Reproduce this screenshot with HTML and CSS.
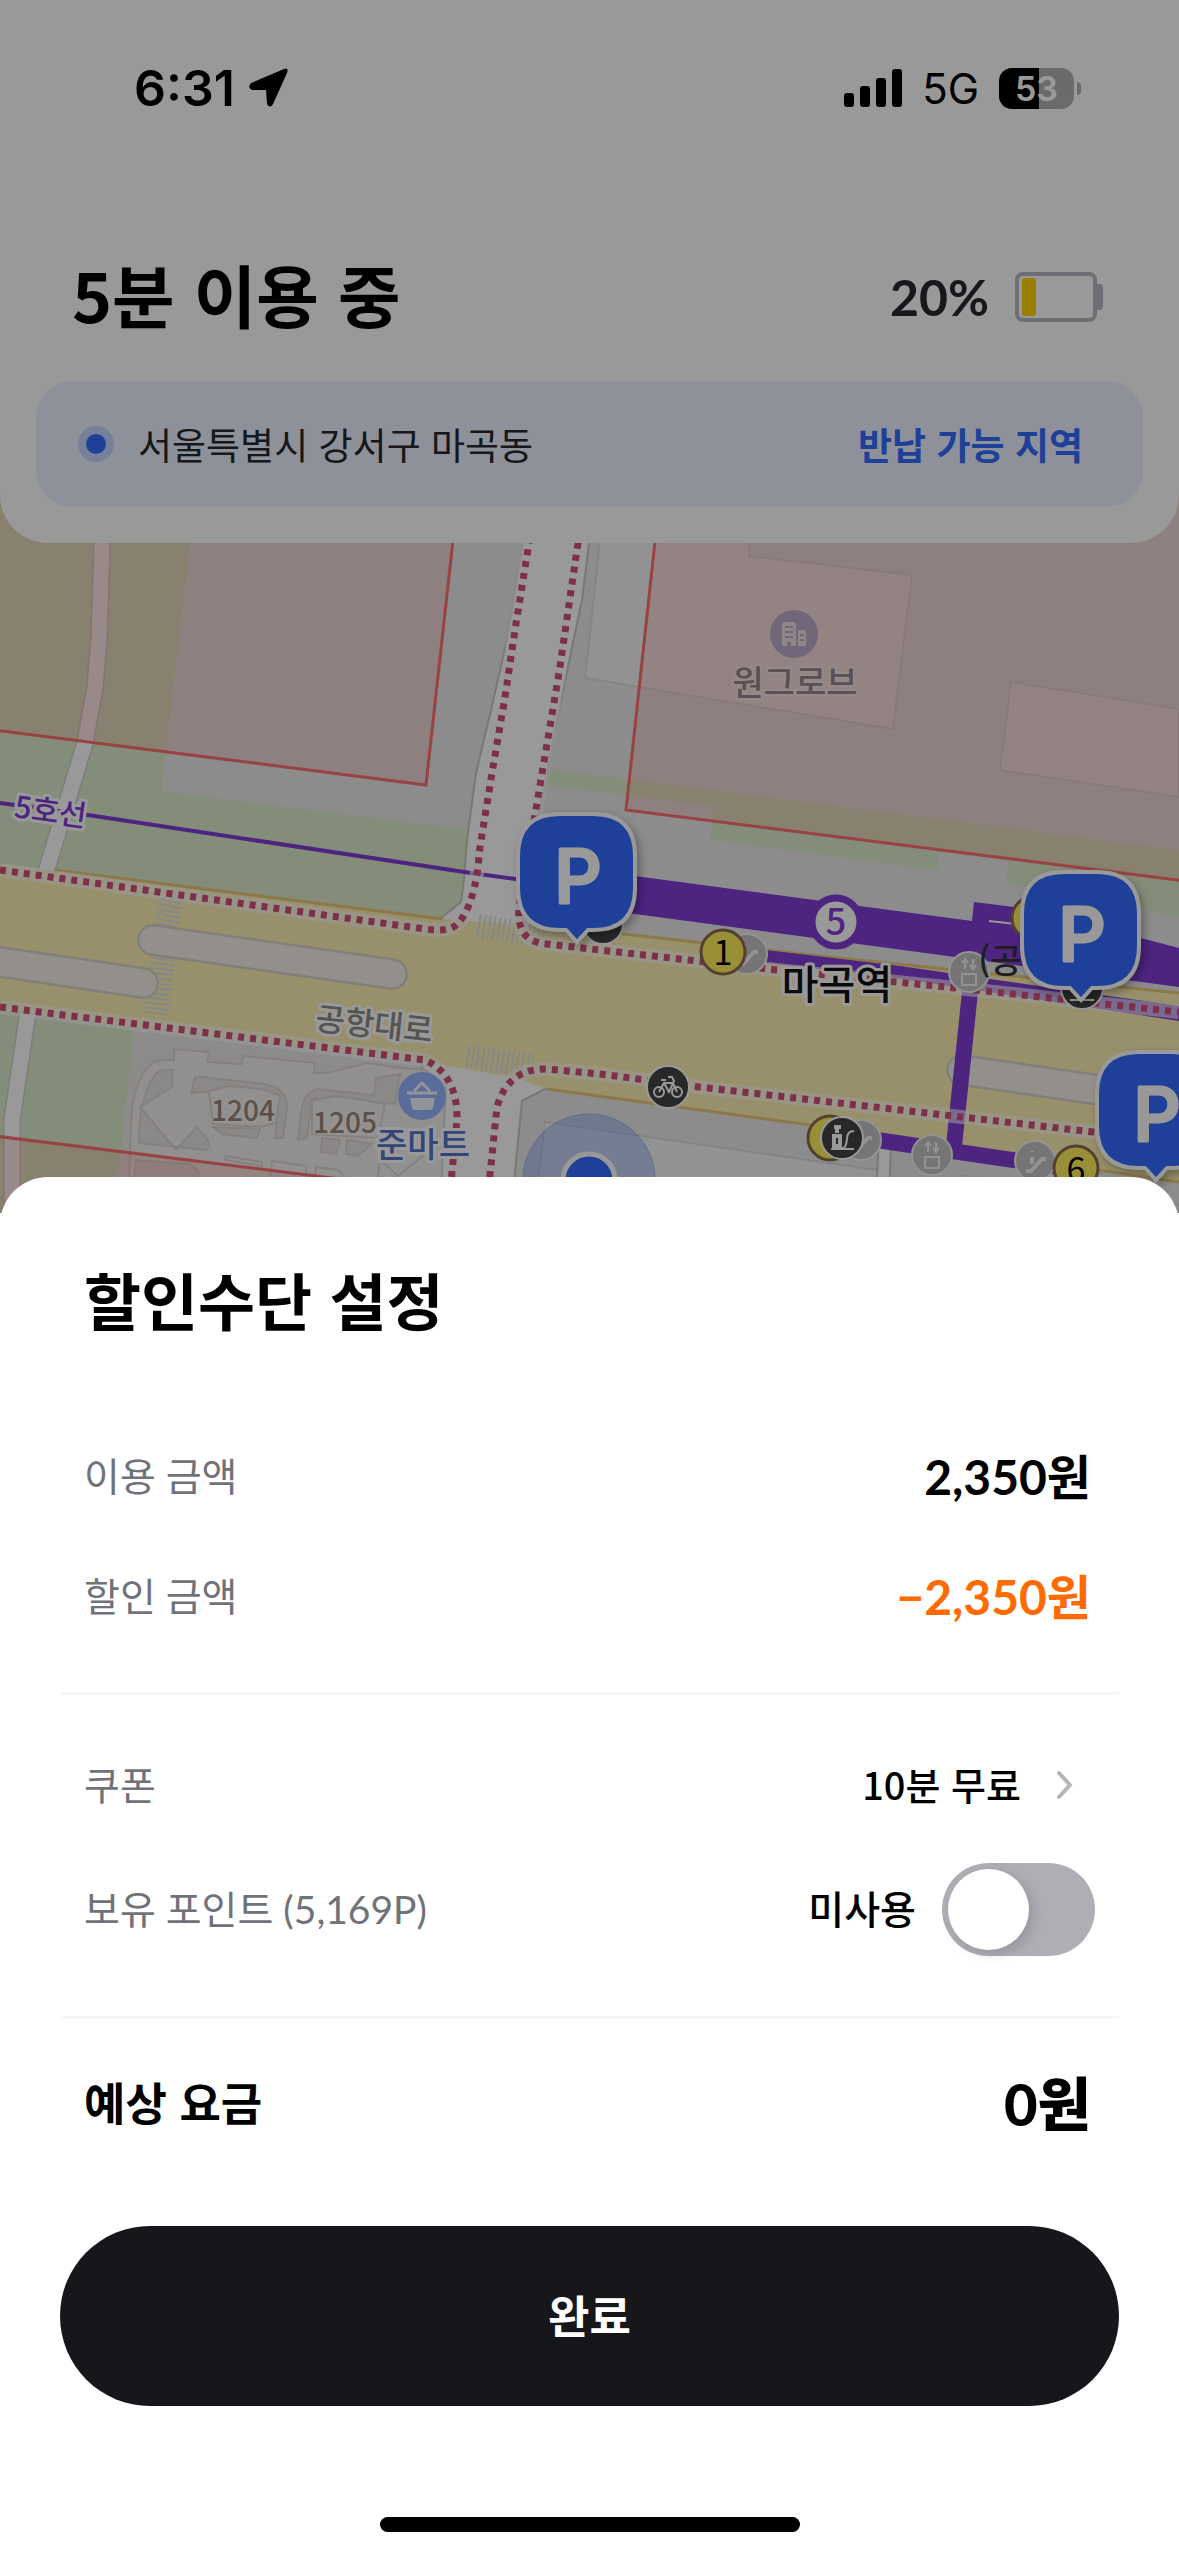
FILE: index.html
```html
<!DOCTYPE html>
<html lang="ko">
<head>
    <meta charset="UTF-8">
    <meta name="viewport" content="width=device-width, initial-scale=1.0">
    <title>할인수단 설정</title>
    <link rel="stylesheet" href="styles.css">
</head>
<body>
    <div class="ride">
        <header class="ride-header">
            <div class="status-bar">
                <div class="status-left">
                    <span class="clock">6:31</span>
                    <svg width="40" height="40" viewBox="0 0 40 40"><path d="M36 1 Q41 -1 39 5 L25 36 Q22 41 19 36 L18 22 L4 22 Q-1 20 3 15 Z"/></svg>
                </div>
                <div class="status-right">
                    <svg width="58" height="38" viewBox="0 0 58 38">
                        <rect x="0" y="24" width="10" height="14" rx="3"/>
                        <rect x="16" y="17" width="10" height="21" rx="3"/>
                        <rect x="32" y="9" width="10" height="29" rx="3"/>
                        <rect x="48" y="0" width="10" height="38" rx="3"/>
                    </svg>
                    <span class="network">5G</span>
                    <div class="phone-battery"><span class="phone-battery-level">53</span></div>
                </div>
            </div>

            <div class="ride-title">
                <h1>5분 이용 중</h1>
                <div class="scooter-battery">
                    <span>20%</span>
                    <svg width="88" height="50" viewBox="0 0 88 50">
                        <rect x="2" y="2" width="78" height="46" rx="6" fill="none" stroke="#b8bac4" stroke-width="4"/>
                        <path d="M82 12 h2 q4 0 4 4 v18 q0 4 -4 4 h-2 z" fill="#b8bac4"/>
                        <rect x="7" y="6" width="14" height="38" rx="3" fill="#ffd200"/>
                    </svg>
                </div>
            </div>

            <div class="area">
                <span class="area-dot"></span>
                <span class="area-name">서울특별시 강서구 마곡동</span>
                <strong class="area-state">반납 가능 지역</strong>
            </div>
        </header>

        <svg class="map" viewBox="0 495 1179 718">
            <defs>
                <g id="pin">
                    <path d="M42 2 H75 Q117 2 117 44 V76 Q117 118 75 118 H70 L59 130 L48 118 H42 Q0 118 0 76 V44 Q0 2 42 2 Z"/>
                    <text x="60" y="91">P</text>
                </g>
                <g id="elevator">
                    <circle r="20"/>
                    <path d="M-7 2 H7 V13 H-7 Z M-4 -3 V-13 M-7 -9 L-4 -13 L-1 -9 M4 -13 V-3 M1 -7 L4 -3 L7 -7"/>
                </g>
                <g id="escalator">
                    <circle r="20"/>
                    <path d="M-9 10 H-4 L7 -2 H11" stroke-width="4"/>
                    <path d="M-3 -10 V-9 M-3 -4 V3" stroke-width="4"/>
                </g>
            </defs>

            <!-- ground -->
            <rect y="495" width="1179" height="718" fill="#e9e9e9"/>
            <path class="green" d="M0 495 H196 L161 791 L470 830 L461 902 L441 918 L0 864 Z"/>
            <path class="green" d="M549 769 L1179 850 V917 L1006 883 L1008 861 L939 852 L937 870 L710 840 L714 807 L545 785 Z"/>
            <path class="green" d="M0 1010 L134 1028 L116 1213 H0 Z"/>
            <path d="M134 1028 L470 1060 V1213 H114 Z" fill="#ece8e6"/>
            <path class="building" d="M605 495 L585 678 L893 729 L912 575 L749 556 V495 Z"/>
            <path class="building" d="M1011 682 L1179 709 V797 L1000 770 Z"/>
            <path class="building" d="M545 1122 L877 1170 V1213 H535 Z"/>
            <path class="building" d="M960 1175 L1179 1205 V1213 H955 Z"/>

            <!-- side roads -->
            <path class="lane-edge" d="M102 495 V543 L99 640 L95 687 L85 743 L46 872"/>
            <path class="lane" d="M102 495 V543 L99 640 L95 687 L85 743 L46 872"/>
            <path class="lane-edge" d="M28 1012 L12 1120 V1213"/>
            <path class="lane" d="M28 1012 L12 1120 V1213"/>
            <path class="road" d="M527 495 L523 543 L507 640 L491 710 L476 773 L467 840 L464 880 L461 902 L441 918 L460 935 L545 945 L520 900 L538 817 L545 787 L555 730 L570 657 L582 600 L589 543 V495 Z"/>
            <path class="road" d="M421 1055 L550 1070 L547 1088 L522 1101 L511 1213 H440 Z"/>
            <path class="road" d="M879 1139 H891 L889 1213 H875 Z"/>

            <!-- main road -->
            <path d="M0 864 L442 919 L617 932 L829 957 L1179 993 V1182 L1098 1170 L803 1124 L547 1089 L517 1078 L421 1061 L134 1028 L0 1010 Z" fill="#fdf0b2"/>
            <path d="M54 870 L442 919 M580 929 L829 957 L1179 993 M547 1089 L803 1124 L1098 1170 L1179 1182" fill="none" stroke="#ebc878" stroke-width="3"/>
            <path class="crosswalk" d="M171 900 L166 926 M163 958 L156 1014 M478 926 L545 937 M467 1056 L532 1066"/>
            <path class="median-edge" d="M153 940 L392 974 M-20 959 L143 983 M962 1070 L1140 1096"/>
            <path class="median" d="M153 940 L392 974 M-20 959 L143 983 M962 1070 L1140 1096"/>

            <!-- apartment complex -->
            <g class="complex">
                <path d="M174 1060 H160 Q146 1064 140 1080 Q132 1095 131 1125 L128 1213 H440 L446 1085 L425 1070 L401 1068 L367 1063 L327 1073 H314 L315 1063 L243 1056 L242 1064 L207 1062 L209 1052 L174 1049 Z"/>
                <path class="yard" d="M172 1070 H162 Q152 1074 147 1090 Q141 1105 140 1120 L139 1143 L205 1150 Q212 1148 208 1140 L197 1127 L176 1150 L140 1107 L172 1087 Z"/>
                <path class="yard" d="M203 1077 L265 1084 Q287 1088 287 1107 L283 1138 H275 L279 1100 L203 1092 L191 1093 L195 1077 Z"/>
                <path class="yard" d="M374 1095 L318 1089 Q304 1093 302 1107 L298 1140 L307 1138 L312 1098 L395 1104 L400 1074 L376 1078 Z"/>
                <path class="yard" d="M322 1138 L340 1140 L336 1154 L321 1152 Z M347 1140 L372 1144 L358 1156 L346 1154 Z"/>
                <path class="yard" d="M213 1127 L260 1129 L257 1138 L222 1134 Z M136 1160 L190 1164 Q200 1170 201 1180 H134 Z"/>
                <path d="M226 1156 L262 1162 V1166 L225 1160 Z M272 1161 L306 1166 V1180 H270 Z M316 1167 L338 1170 Q346 1176 345 1185 H314 Z"/>
                <path d="M209 1091 L230 1086 L260 1089 L280 1095 L276 1123 L260 1127 L213 1124 Z"/>
                <path d="M312 1101 L335 1096 L365 1100 L385 1104 L378 1138 L312 1134 Z"/>
                <path d="M380 1160 L398 1176 L430 1150 M380 1160 L378 1177 L400 1180"/>
            </g>

            <!-- restricted zones -->
            <path class="zone" d="M-5 495 H458 L426 785 L-5 730 Z"/>
            <path class="zone" d="M660 495 L626 810 L1185 881 V495 Z"/>
            <path class="zone" d="M-5 1136 L620 1214 L-5 1220 Z"/>

            <!-- subway line 5 -->
            <path d="M0 803 L88 815 L471 873 L530 881" fill="none" stroke="#803cd5" stroke-width="4"/>
            <path d="M620 874 L972 921 L974 902 L1030 909 L1179 948 V987 L955 957 L620 912 Z" fill="#803cd5"/>
            <path d="M766 950 L900 966 L1179 1006 V1021 L890 977 L766 963 Z" fill="#803cd5"/>
            <path d="M971 982 L954 1146" fill="none" stroke="#803cd5" stroke-width="16"/>
            <path d="M870 1139 L1054 1166" fill="none" stroke="#803cd5" stroke-width="16"/>
            <path d="M989 921 L1025 925" stroke="#fff" stroke-width="2"/>

            <!-- footpaths -->
            <g class="path-halo">
                <path d="M0 870 L425 929 Q446 932 455 926 Q472 912 478 867 L480 847 L492 773 L505 697 L515 630 L529 543 L533 495"/>
                <path d="M582 495 L578 543 L559 673 L535 815 L519 908 Q516 942 547 944 L600 950 L777 970 L976 990 L1179 1012"/>
                <path d="M0 1007 L425 1060 Q458 1075 457 1120 L448 1213"/>
                <path d="M486 1213 L497 1107 Q508 1068 547 1069 L600 1074 L699 1087 L1093 1132 L1179 1143"/>
            </g>
            <g class="path-dots">
                <path d="M0 870 L425 929 Q446 932 455 926 Q472 912 478 867 L480 847 L492 773 L505 697 L515 630 L529 543 L533 495"/>
                <path d="M582 495 L578 543 L559 673 L535 815 L519 908 Q516 942 547 944 L600 950 L777 970 L976 990 L1179 1012"/>
                <path d="M0 1007 L425 1060 Q458 1075 457 1120 L448 1213"/>
                <path d="M486 1213 L497 1107 Q508 1068 547 1069 L600 1074 L699 1087 L1093 1132 L1179 1143"/>
            </g>

            <!-- places -->
            <circle cx="794" cy="634" r="24" fill="#beaccb"/>
            <path d="M782 646 V625 q0 -3 3 -3 h8 q3 0 3 3 V646 h-5 v-4 h-4 v4 Z M798 646 V630 h5 q3 0 3 3 V646 Z" fill="#eedfe0"/>
            <path d="M785 627 h8 M785 632 h8 M785 637 h8 M800 635 h4 M800 640 h4" stroke="#beaccb" stroke-width="2"/>
            <circle cx="422" cy="1096" r="24" fill="#96b4ff"/>
            <path d="M407 1093 H437 M414 1091 L422 1083 L430 1091" fill="none" stroke="#f2f5ff" stroke-width="3"/>
            <path d="M410 1098 H435 L433 1108 Q432 1110 430 1110 H414 Q412 1110 412 1108 Z" fill="#f2f5ff"/>

            <g class="map-label">
                <text class="soft" x="795" y="695" font-size="34" fill="#99848e">원그로브</text>
                <text x="423" y="1157" font-size="34" fill="#5774c8">준마트</text>
                <text class="soft" x="243" y="1121" font-size="28" fill="#988878">1204</text>
                <text class="soft" x="345" y="1133" font-size="28" fill="#988878">1205</text>
                <text x="373" y="1036" font-size="32" fill="#8c8c88" transform="rotate(6 373 1036)">공항대로</text>
                <text x="49" y="822" font-size="30" fill="#803cd5" transform="rotate(8 49 822)">5호선</text>
            </g>

            <!-- station exits and facilities -->
            <g class="facility">
                <use href="#escalator" x="747" y="954"/>
                <use href="#elevator" x="969" y="972"/>
                <use href="#elevator" x="932" y="1155"/>
                <use href="#escalator" x="861" y="1140"/>
                <use href="#escalator" x="1035" y="1161"/>
            </g>
            <g class="exit">
                <circle cx="723" cy="952" r="22"/>
                <text x="723" y="965">1</text>
                <circle cx="830" cy="1138" r="22"/>
                <circle cx="1034" cy="918" r="22"/>
                <circle cx="1076" cy="1168" r="22"/>
                <text x="1076" y="1182">6</text>
            </g>
            <g class="rental">
                <circle cx="603" cy="924" r="20"/>
                <circle cx="1082" cy="988" r="21"/>
                <path d="M1070 1000 H1094"/>
                <circle cx="668" cy="1087" r="21"/>
                <circle cx="659" cy="1092" r="5"/>
                <circle cx="677" cy="1092" r="5"/>
                <path d="M659 1092 L664 1083 H673 L677 1092 M664 1083 L669 1092 L674 1081 L672 1077 H668 M661 1080 H666"/>
                <circle cx="842" cy="1138" r="21"/>
                <path d="M831 1149 H854 M842 1148 Q846 1149 847 1139 Q847 1131 854 1131"/>
                <path d="M834 1136 H840 V1146 H834 Z M837 1133 V1128 M834 1127 H841" stroke-width="4"/>
            </g>
            <circle cx="836" cy="922" r="24" fill="#fff" stroke="#803cd5" stroke-width="7"/>
            <g class="map-label">
                <text class="plain" x="836" y="935" font-size="36" font-weight="700" fill="#803cd5">5</text>
                <text x="837" y="999" font-size="40" fill="#111">마곡역</text>
                <text class="plain" x="1000" y="973" font-size="34" fill="#333">(공</text>
            </g>

            <!-- current position -->
            <circle cx="589" cy="1180" r="66" fill="#326bfd" fill-opacity=".25" stroke="#9db6f5" stroke-width="1"/>
            <circle cx="589" cy="1180" r="26" fill="#326bfd" stroke="#fff" stroke-width="5"/>

            <g class="pins">
                <use href="#pin" x="518" y="812"/>
                <use href="#pin" x="1022" y="870"/>
                <use href="#pin" x="1097" y="1050"/>
            </g>
        </svg>
        <div class="dim"></div>
    </div>

    <main class="sheet">
        <h2>할인수단 설정</h2>
        <div class="row">
            <span class="label">이용 금액</span>
            <span class="price">2,350원</span>
        </div>
        <div class="row">
            <span class="label">할인 금액</span>
            <span class="price discount">−2,350원</span>
        </div>
        <hr>
        <div class="options">
            <div class="row option">
                <span class="label" id="couponLabel">쿠폰</span>
                <button type="button" class="coupon" aria-labelledby="couponLabel">
                    <span>10분 무료</span>
                    <svg width="54" height="32" viewBox="0 0 54 32"><path d="M22 4 L33 16 L22 28" fill="none" stroke="#b4b6bc" stroke-width="4" stroke-linecap="round" stroke-linejoin="round"/></svg>
                </button>
            </div>
            <div class="row option point">
                <label class="label" for="usePoint">보유 포인트 (5,169P)</label>
                <span class="point-use"><span>미사용</span> <input type="checkbox" role="switch" id="usePoint" class="switch"></span>
            </div>
        </div>
        <hr>
        <div class="row total">
            <span>예상 요금</span>
            <strong>0원</strong>
        </div>
        <button type="button" class="done">완료</button>
        <div class="home-bar"></div>
    </main>
</body>
</html>
```
FILE: styles.css
```css
* {
    box-sizing: border-box;
}

body {
    margin: 0;
    background-color: #fff;
    color: #000;
    font-family: "Noto Sans CJK KR", sans-serif;
}

h1, h2 {
    margin: 0;
    font-weight: 700;
}

button {
    border: none;
    padding: 0;
    font-family: inherit;
    cursor: pointer;
}

svg {
    flex: none;
}

/* dimmed riding screen */
.ride {
    position: relative;
    overflow: hidden;
}

.dim {
    position: absolute;
    inset: 0;
    background-color: rgba(0, 0, 0, 0.4);
}

.ride-header {
    position: relative;
    padding-bottom: 36px;
    border-radius: 0 0 48px 48px;
    background-color: #fff;
}

.status-bar {
    display: flex;
    justify-content: space-between;
    align-items: center;
    height: 176px;
    padding: 0 98px 0 134px;
    font-family: Inter, sans-serif;
}

.status-left, .status-right {
    display: flex;
    align-items: center;
}

.status-left {
    gap: 13px;
}

.status-right {
    gap: 20px;
}

.clock {
    font-size: 50px;
    font-weight: 600;
}

.network {
    font-size: 42px;
    font-weight: 400;
}

.phone-battery {
    position: relative;
    width: 75px;
    height: 41px;
    margin-right: 7px;
    border-radius: 13px;
    background: linear-gradient(to right, #000 53%, #b2b2b2 53%);
    text-align: center;
}

.phone-battery::after {
    content: "";
    position: absolute;
    top: 14px;
    right: -7px;
    width: 4px;
    height: 13px;
    border-radius: 0 4px 4px 0;
    background-color: #b2b2b2;
}

.phone-battery-level {
    color: #fff;
    font-size: 34px;
    font-weight: 600;
    line-height: 41px;
}

.ride-title {
    display: flex;
    justify-content: space-between;
    align-items: center;
    padding: 77px 76px 40px 72px;
}

.ride-title h1 {
    padding-bottom: 6px;
    font-size: 68px;
    line-height: 82px;
}

.scooter-battery {
    display: flex;
    align-items: center;
    gap: 26px;
    color: #25282e;
    font-family: Lato, "Noto Sans CJK KR", sans-serif;
    font-size: 50px;
    font-weight: 700;
    line-height: 60px;
}

.area {
    display: flex;
    align-items: center;
    height: 126px;
    margin: 0 36px;
    padding: 0 60px 0 42px;
    border-radius: 36px;
    background-color: #edf2ff;
    font-size: 37px;
}

.area-dot {
    width: 36px;
    height: 36px;
    margin-right: 24px;
    border: 8px solid #c8d5ff;
    border-radius: 50%;
    background-color: #326bfd;
}

.area-name {
    flex: 1;
    color: #25282e;
}

.area-state {
    color: #326bfd;
}

/* map */
.map {
    display: block;
    width: 100%;
    margin-top: -48px;
}

.green {
    fill: #dcebca;
}

.building {
    fill: #f3f3f3;
    stroke: #dcdcdc;
    stroke-width: 2;
}

.lane, .lane-edge {
    fill: none;
    stroke: #fff;
    stroke-width: 15;
}

.lane-edge {
    stroke: #d0d0cc;
    stroke-width: 18;
}

.road {
    fill: #fff;
    stroke: #c8c8c0;
    stroke-width: 2;
}

.crosswalk {
    fill: none;
    stroke: #e0e0e4;
    stroke-width: 24;
    stroke-dasharray: 2 3;
}

.median, .median-edge {
    fill: none;
    stroke: #f5f1ea;
    stroke-width: 27;
    stroke-linecap: round;
}

.median-edge {
    stroke: #d8d4cc;
    stroke-width: 32;
}

.complex path {
    fill: #f4f1ef;
    stroke: #dbd7d4;
    stroke-width: 2;
}

.complex .yard {
    fill: #e8e5e2;
}

.zone {
    fill: #ff8576;
    fill-opacity: 0.2;
    stroke: #ff6e6e;
    stroke-width: 3;
}

.path-halo path, .path-dots path {
    fill: none;
    stroke: #fff;
    stroke-opacity: 0.6;
    stroke-width: 14;
}

.path-dots path {
    stroke: #d05078;
    stroke-opacity: 1;
    stroke-width: 7;
    stroke-dasharray: 6 6;
}

.map-label text {
    stroke: #fff;
    stroke-width: 6;
    stroke-linejoin: round;
    paint-order: stroke;
    text-anchor: middle;
    font-weight: 500;
}

.map-label .soft {
    stroke-opacity: 0.3;
    stroke-width: 4;
}

.map-label .plain {
    stroke: none;
}

.facility {
    fill: #c4c4c4;
    stroke: #f4f4f4;
    stroke-width: 2;
}

#elevator path, #escalator path {
    fill: none;
}

.exit circle {
    fill: #ffee5c;
    stroke: #8a6c50;
    stroke-width: 3;
}

.exit text {
    font-size: 34px;
    text-anchor: middle;
}

.rental {
    fill: #444;
    stroke: #fff;
    stroke-width: 2;
}

.rental path {
    fill: none;
}

.pins {
    fill: #326bfd;
    stroke: #fff;
    stroke-width: 4;
    filter: drop-shadow(3px 4px 4px rgba(0, 0, 0, 0.3));
}

#pin text {
    fill: #fff;
    stroke: #fff;
    stroke-width: 3;
    stroke-linejoin: round;
    font-family: Inter, sans-serif;
    font-size: 74px;
    font-weight: 500;
    text-anchor: middle;
}

/* bottom sheet */
.sheet {
    position: relative;
    margin-top: -36px;
    padding: 82px 60px 24px;
    border-radius: 48px 48px 0 0;
    background-color: #fff;
}

.sheet h2 {
    margin: 0 24px 77px;
    font-size: 62px;
    line-height: 80px;
}

.sheet hr {
    height: 3px;
    margin: 36px 0 24px;
    border: none;
    background-color: #f5f6f8;
}

.row {
    display: flex;
    justify-content: space-between;
    align-items: center;
    height: 120px;
    padding: 0 28px 0 24px;
    font-size: 39px;
}

/* Hangul glyphs sit low in their line box */
.row span, .row label, .row strong {
    padding-bottom: 4px;
}

.row .point-use {
    padding-bottom: 0;
}

.label {
    color: #70727a;
    font-family: Lato, "Noto Sans CJK KR", sans-serif;
}

.price {
    font-family: Lato, "Noto Sans CJK KR", sans-serif;
    font-size: 48px;
    font-weight: 700;
}

.discount {
    color: #ff6b00;
}

.options {
    padding: 4px 0 9px;
}

.option {
    height: 124px;
}

.coupon {
    display: flex;
    align-items: center;
    gap: 16px;
    background: none;
    color: #000;
    font-size: 38px;
    font-weight: 500;
}

.point {
    padding-right: 24px;
}

.point-use {
    display: flex;
    align-items: center;
    gap: 26px;
    font-weight: 500;
}

.switch {
    appearance: none;
    width: 153px;
    height: 93px;
    margin: 0;
    padding: 6px;
    border-radius: 47px;
    background-color: #aeafb5;
    cursor: pointer;
}

.switch::before {
    content: "";
    display: block;
    width: 81px;
    height: 81px;
    border-radius: 50%;
    background-color: #fff;
    box-shadow: 4px 4px 12px rgba(0, 0, 0, 0.15);
}

.switch:checked {
    background-color: #326bfd;
}

.switch:checked::before {
    margin-left: auto;
}

.total {
    font-size: 45px;
    font-weight: 700;
}

.total strong {
    font-family: Lato, "Noto Sans CJK KR", sans-serif;
    font-size: 58px;
}

.done {
    display: block;
    width: 100%;
    height: 180px;
    margin-top: 63px;
    padding-bottom: 4px;
    border-radius: 90px;
    background-color: #16171b;
    color: #fff;
    font-size: 45px;
    font-weight: 700;
}

.home-bar {
    width: 420px;
    height: 15px;
    margin: 111px auto 0;
    border-radius: 8px;
    background-color: #000;
}
```
